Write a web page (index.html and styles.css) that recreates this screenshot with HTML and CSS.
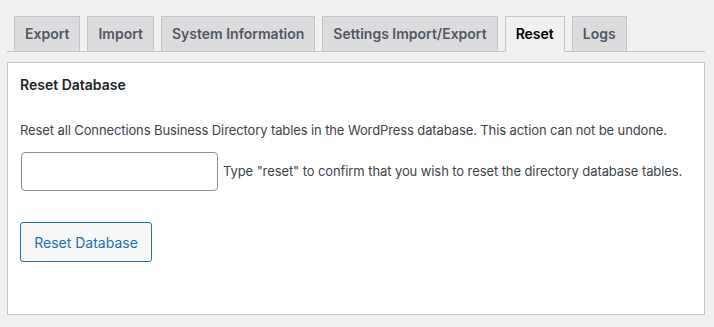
FILE: index.html
```html
<!DOCTYPE html>
<html lang="en">
<head>
    <meta charset="UTF-8">
    <meta name="viewport" content="width=device-width, initial-scale=1.0">
    <title>Tools - Reset</title>
    <link rel="stylesheet" href="styles.css">
</head>
<body>
    <div class="wrap">
        <nav class="nav-tab-wrapper">
            <a class="nav-tab" href="#">Export</a>
            <a class="nav-tab" href="#">Import</a>
            <a class="nav-tab" href="#">System Information</a>
            <a class="nav-tab" href="#">Settings Import/Export</a>
            <a class="nav-tab nav-tab-active" href="#">Reset</a>
            <a class="nav-tab" href="#">Logs</a>
        </nav><!-- .nav-tab-wrapper END -->

        <div class="postbox">
            <h3>Reset Database</h3>
            <p>Reset all Connections Business Directory tables in the WordPress database. This action can not be undone.</p>
            <div class="confirm">
                <input type="text" class="regular-text">
                <span>Type "reset" to confirm that you wish to reset the directory database tables.</span>
            </div>
            <button class="button" type="button">Reset Database</button>
        </div><!-- .postbox END -->
    </div>
</body>
</html>
```

FILE: styles.css
```css
* {
    margin: 0;
    padding: 0;
    box-sizing: border-box;
}
html, body {
    background-color: #f0f0f1;
}
body {
    font-family: Inter, "Liberation Sans", sans-serif;
    font-size: 13px;
    line-height: 1.4;
    color: #3c434a;
}
.wrap {
    padding: 16px 9px 0 7px;
}

/* 탭 */
.nav-tab-wrapper {
    display: flex;
    border-bottom: 1px solid #c3c4c7;
    padding-left: 7px;
}
.nav-tab {
    display: block;
    margin-right: 7px;
    margin-bottom: -1px;
    padding: 5px 10px;
    border: 1px solid #c3c4c7;
    background-color: #dcdcde;
    color: #50575e;
    font-size: 14px;
    font-weight: 600;
    line-height: 24px;
    text-decoration: none;
    white-space: nowrap;
}
.nav-tab-active {
    background-color: #f0f0f1;
    border-bottom-color: #f0f0f1;
    color: #000;
}

/* 박스 */
.postbox {
    margin-top: 10px;
    background-color: #fff;
    border: 1px solid #c3c4c7;
    padding: 12px 12px 52px;
}
.postbox h3 {
    font-size: 14px;
    font-weight: 600;
    line-height: 20px;
    color: #1d2327;
}
.postbox p {
    margin-top: 26px;
    line-height: 18px;
    letter-spacing: -0.11px;
}
.confirm {
    display: flex;
    align-items: center;
    gap: 5px;
    margin-top: 13px;
    letter-spacing: -0.09px;
}
.confirm input {
    width: 197px;
    height: 39px;
    margin-left: 1px;
    border: 1px solid #8c8f94;
    border-radius: 4px;
    background-color: #fff;
}
.button {
    display: block;
    margin-top: 31px;
    width: 132px;
    height: 40px;
    border: 1px solid #2271b1;
    border-radius: 3px;
    background-color: #f6f7f7;
    color: #2271b1;
    font-family: inherit;
    font-size: 14px;
    cursor: pointer;
}
```
